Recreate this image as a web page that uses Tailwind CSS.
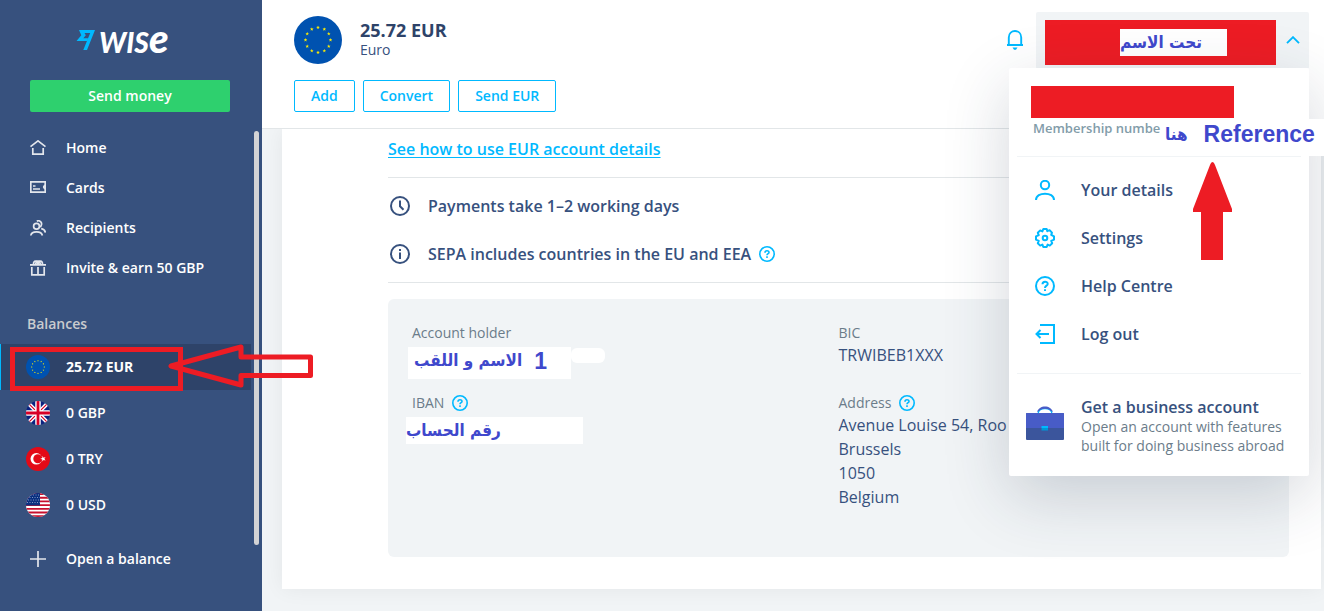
<!DOCTYPE html>
<html lang="en">
  <head>
    <meta charset="UTF-8" />
    <title>25.72 EUR | Wise</title>
    <meta name="viewport" content="width=device-width, initial-scale=1.0" />
    <script src="https://cdn.jsdelivr.net/npm/@tailwindcss/browser@4"></script>
  </head>
  <body class="flex min-h-screen overflow-x-hidden bg-[#f1f4f6] font-['Open_Sans',sans-serif] text-[#37517e]">

    <!-- Shared shapes -->
    <svg class="hidden">
      <symbol id="help" viewBox="0 0 16 16">
        <circle cx="8" cy="8" r="7.2" fill="none" stroke="#00b9ff" stroke-width="1.6" />
        <path d="M6 6.7C6 4.2 10 4.3 10 6.4C10 7.7 8 7.6 8 9.3" fill="none" stroke="#00b9ff" stroke-width="1.6" />
        <path d="M7.2 10.3h1.6v1.6h-1.6z" fill="#00b9ff" />
      </symbol>
      <symbol id="star" viewBox="-1 -1 2 2">
        <path d="M0-1L.24-.32L.95-.31L.38.12L.59.81L0 .4L-.59.81L-.38.12L-.95-.31L-.24-.32Z" fill="#ffee02" />
      </symbol>
      <symbol id="flag-eu" viewBox="0 0 48 48">
        <circle cx="24" cy="24" r="24" fill="#0052b0" />
        <use href="#star" x="22" y="9.5" width="4" height="4" />
        <use href="#star" x="28.3" y="11.2" width="4" height="4" />
        <use href="#star" x="32.8" y="15.8" width="4" height="4" />
        <use href="#star" x="34.5" y="22" width="4" height="4" />
        <use href="#star" x="32.8" y="28.3" width="4" height="4" />
        <use href="#star" x="28.3" y="32.8" width="4" height="4" />
        <use href="#star" x="22" y="34.5" width="4" height="4" />
        <use href="#star" x="15.8" y="32.8" width="4" height="4" />
        <use href="#star" x="11.2" y="28.3" width="4" height="4" />
        <use href="#star" x="9.5" y="22" width="4" height="4" />
        <use href="#star" x="11.2" y="15.8" width="4" height="4" />
        <use href="#star" x="15.8" y="11.2" width="4" height="4" />
      </symbol>
    </svg>

    <!-- SIDEBAR -->
    <aside class="relative z-10 flex w-[262px] shrink-0 flex-col bg-[#37517e] text-sm font-semibold text-white">
      <a href="#" aria-label="Wise" class="mt-5 flex h-10 items-center pl-[76px]">
        <svg class="h-5 w-[19px]" viewBox="0 0 19 20" fill="#00b9ff">
          <path d="M3 0H19L11 20H7.300L14.200 3H8.500L9.800 5.300L7.300 8.300H12L10.900 11H.5L5.300 5.300Z" />
        </svg>
        <span class="ml-1 flex items-baseline font-['Lato',sans-serif] text-[28px] leading-10 font-black italic">WIS<span class="text-[40px] leading-10">e</span></span>
      </a>
      <button class="mx-[30px] mt-5 h-8 w-[200px] rounded-xs bg-[#2ed06e] font-semibold">Send money</button>

      <nav class="relative mt-4">
        <a href="#" class="flex h-10 items-center gap-5 pl-[30px]">
          <svg class="size-4" viewBox="0 0 16 16" fill="none" stroke="#e3e6ec" stroke-width="1.700"><path d="M.5 6.700L8 .9L15.500 6.700M2.800 8V14.200H13.200V8" /></svg>
          Home
        </a>
        <a href="#" class="flex h-10 items-center gap-5 pl-[30px]">
          <svg class="size-4" viewBox="0 0 16 16" fill="none" stroke="#e3e6ec" stroke-width="1.700">
            <path d="M.8 1.800H15.200V12.200H.8zM3 6h2.500M3 9h7" />
            <path d="M15.500 4.500C12 5 12 9 15.500 9.500z" fill="#e3e6ec" stroke="none" />
          </svg>
          Cards
        </a>
        <a href="#" class="flex h-10 items-center gap-5 pl-[30px]">
          <svg class="size-4" viewBox="0 0 16 16" fill="none" stroke="#e3e6ec" stroke-width="1.700">
            <circle cx="6.500" cy="6.200" r="2.900" />
            <path d="M.8 15.500C1.500 10.600 11.500 10.600 12.400 15.500M6.800 1.200C9.500-.3 12.600 2.500 11.200 5.500C11 6.200 10.600 6.700 10.200 7.100M11.200 8.700C13.400 9 15 10.200 15.400 12.500" />
          </svg>
          Recipients
        </a>
        <a href="#" class="flex h-10 items-center gap-5 pl-[30px]">
          <svg class="size-4" viewBox="0 0 16 16" fill="none" stroke="#e3e6ec" stroke-width="1.700">
            <path d="M0 4.800H16M1.800 7V14.800H14.200V7M8 7V15M8 4.500C7.500 0 3.200 0 3.500 4.500M8 4.500C8.500 0 12.800 0 12.500 4.500M5.500 4.500C6 2 7 1 8 1S10 2 10.500 4.500" />
          </svg>
          Invite &amp; earn 50 GBP
        </a>

        <h2 class="mt-6 mb-2 pl-[27px] leading-6 text-[#c9cbce]">Balances</h2>

        <a href="#" class="relative mr-[11px] flex h-[46px] items-center gap-4 border-l border-[#00b9ff] bg-[#2e4369] pl-[25px] font-bold">
          <svg class="size-6"><use href="#flag-eu" /></svg>
          25.72 EUR
          <span class="absolute top-[3px] left-[9px] h-11 w-[173px] border-[5px] border-[#ed1c24]"></span>
          <svg class="absolute top-0 left-[165px] h-[46px] w-[150px]" viewBox="0 0 150 46" fill="none" stroke="#ed1c24" stroke-width="5" stroke-linejoin="round">
            <path d="M5 22L75 3V13H144.500V31.500H75V41Z" />
          </svg>
        </a>
        <a href="#" class="flex h-[46px] items-center gap-4 pl-[26px]">
          <svg class="size-6" viewBox="0 0 24 24">
            <clipPath id="round"><circle cx="12" cy="12" r="12" /></clipPath>
            <g clip-path="url(#round)">
              <path d="M0 0H24V24H0z" fill="#0b2280" />
              <path d="M0 0L24 24M24 0L0 24" stroke="#fff" stroke-width="4" />
              <path d="M0 0L24 24M24 0L0 24" stroke="#d80027" stroke-width="1.200" />
              <path d="M12 0V24M0 12H24" stroke="#fff" stroke-width="5.500" />
              <path d="M12 0V24M0 12H24" stroke="#d80027" stroke-width="2.800" />
            </g>
          </svg>
          0 GBP
        </a>
        <a href="#" class="flex h-[46px] items-center gap-4 pl-[26px]">
          <svg class="size-6" viewBox="0 0 24 24">
            <circle cx="12" cy="12" r="12" fill="#e30a17" />
            <circle cx="10.300" cy="11.800" r="5.800" fill="#fff" />
            <circle cx="11.800" cy="11.800" r="4.500" fill="#e30a17" />
            <path d="M14.300 11.800L16.300 11.100V9L17.600 10.700L19.600 10L18.400 11.800L19.600 13.500L17.600 12.900L16.300 14.600V12.500Z" fill="#fff" />
          </svg>
          0 TRY
        </a>
        <a href="#" class="flex h-[46px] items-center gap-4 pl-[26px]">
          <svg class="size-6" viewBox="0 0 24 24">
            <g clip-path="url(#round)">
              <path d="M0 0H24V24H0z" fill="#fff" />
              <path d="M0 1H24M0 4.700H24M0 8.400H24M0 12.100H24M0 15.800H24M0 19.500H24M0 23.200H24" stroke="#c8102e" stroke-width="1.850" />
              <path d="M0 0H14V12.500H0z" fill="#0a3080" />
              <path d="M2 2H14M1 4.500H14M2 7H14M1 9.500H14" stroke="#9fb0d0" stroke-width=".8" stroke-dasharray="1 1.500" />
            </g>
          </svg>
          0 USD
        </a>
        <a href="#" class="mt-[11px] flex h-10 items-center gap-5 pl-[30px]">
          <svg class="size-4" viewBox="0 0 16 16" stroke="#e3e6ec" stroke-width="1.700"><path d="M8 0V16M0 8H16" /></svg>
          Open a balance
        </a>
        <span class="absolute top-[3px] right-[3px] -z-10 h-[414px] w-[5px] rounded-full bg-[#d3d3d5]"></span>
      </nav>
    </aside>

    <!-- CONTENT -->
    <div class="flex min-w-0 flex-1 flex-col">
      <header class="relative z-10 flex items-start justify-between border-b border-[#e2e6e8] bg-white pr-[15px] pb-4 pl-8">
        <div class="mt-4">
          <div class="flex items-center gap-[18px]">
            <svg class="size-12"><use href="#flag-eu" /></svg>
            <div>
              <h1 class="text-lg leading-5 font-bold text-[#2e4369]">25.72 EUR</h1>
              <p class="text-sm leading-5">Euro</p>
            </div>
          </div>
          <div class="mt-4 flex gap-2 text-sm font-semibold text-[#00b9ff]">
            <button class="h-8 rounded-xs border border-[#00b9ff] px-4 font-semibold">Add</button>
            <button class="h-8 rounded-xs border border-[#00b9ff] px-4 font-semibold">Convert</button>
            <button class="h-8 rounded-xs border border-[#00b9ff] px-4 font-semibold">Send EUR</button>
          </div>
        </div>

        <div class="relative mt-3 flex items-center gap-3">
          <button aria-label="Notifications">
            <svg class="h-5 w-[18px]" viewBox="0 0 18 20" fill="none" stroke="#00b9ff" stroke-width="1.900">
              <path d="M1 15H17M2.800 15V7.500C2.800-1.100 15.200-1.100 15.200 7.500V15" />
              <path d="M6.500 17.500H11.500L10 19.800H8Z" fill="#00b9ff" stroke="none" />
            </svg>
          </button>
          <button aria-label="Account menu" class="flex h-14 w-[273px] items-center justify-between rounded-t-xs bg-[#f1f4f6] px-[9px]">
            <span class="mt-1 flex h-[45px] w-[231px] items-center bg-[#ed1c24] pl-[75px]">
              <span dir="rtl" lang="ar" class="flex h-[27px] w-[107px] items-center justify-end bg-white font-['DejaVu_Sans_Condensed','DejaVu_Sans',sans-serif] text-[17px] leading-6 font-bold whitespace-nowrap text-[#3f48cc]">تحت الاسم</span>
            </span>
            <svg class="h-2 w-[14px]" viewBox="0 0 14 8" fill="none" stroke="#00b9ff" stroke-width="1.900"><path d="M1 7.200L7 1.200L13 7.200" /></svg>
          </button>

          <!-- Account menu -->
          <div class="absolute top-full right-0 w-[300px] rounded-xs bg-white px-2 pt-[18px] pb-[21px] shadow-[0_20px_66px_rgba(34,48,73,0.2)]">
            <div class="ml-[14px] h-8 w-[203px] bg-[#ed1c24]"></div>
            <p class="ml-4 text-[13px] leading-5 font-semibold text-[#829ca9]">Membership numbe</p>
            <div class="absolute top-[51px] left-[156px] flex h-[37px] w-[159px] items-center gap-4 bg-white pb-2 text-[23px] leading-7 font-bold text-[#3f48cc]">
              <span dir="rtl" lang="ar" class="font-['DejaVu_Sans_Condensed','DejaVu_Sans',sans-serif] text-[17px]">هنا</span>
              <span class="font-['Liberation_Sans',sans-serif]">Reference</span>
            </div>
            <svg class="absolute top-[93px] left-[184px] h-[100px] w-10" viewBox="0 0 40 100" fill="#ed1c24"><path d="M19.500 1Q21 1 22 4L39 48V51H30V99H8V51H0V48L17 4Q18 1 19.500 1Z" /></svg>

            <ul class="mt-[18px] border-y border-[#f1f4f6] pt-[9px] pb-[15px] font-semibold">
              <li>
                <a href="#" class="flex h-12 items-center gap-[26px] pl-[18px]">
                  <svg class="size-5" viewBox="0 0 20 20" fill="none" stroke="#00b9ff" stroke-width="2"><circle cx="10" cy="5" r="4.200" /><path d="M1 20C1 11.500 19 11.500 19 20" /></svg>
                  Your details
                </a>
              </li>
              <li>
                <a href="#" class="flex h-12 items-center gap-[26px] pl-[18px]">
                  <svg class="size-5" viewBox="0 0 20 20" fill="none" stroke="#00b9ff" stroke-width="2" stroke-linejoin="round">
                    <path d="M8.300 1H11.700L12.300 3.200L14.600 2.200L17 4.600L16.200 6.900L19 8.300V11.700L16.200 12.900L17.200 15.200L14.800 17.600L12.600 16.600L11.700 19H8.300L7.400 16.600L5.200 17.600L2.800 15.200L3.800 12.900L1 11.700V8.300L3.800 7.100L2.800 4.800L5.200 2.400L7.400 3.400Z" />
                    <circle cx="10" cy="10" r="2.300" />
                  </svg>
                  Settings
                </a>
              </li>
              <li>
                <a href="#" class="flex h-12 items-center gap-[26px] pl-[18px]">
                  <svg class="size-5" viewBox="0 0 20 20" fill="none" stroke="#00b9ff" stroke-width="2">
                    <circle cx="10" cy="10" r="9" />
                    <path d="M7.500 8.200C7.500 4.900 12.700 5 12.700 7.900C12.700 9.700 10 9.700 10 12M10 13.200V15" />
                  </svg>
                  Help Centre
                </a>
              </li>
              <li>
                <a href="#" class="flex h-12 items-center gap-[26px] pl-[18px]">
                  <svg class="size-5" viewBox="0 0 20 20" fill="none" stroke="#00b9ff" stroke-width="2"><path d="M5 1H19V19H5M14 10H1.500M5.500 6L1.500 10L5.500 14" /></svg>
                  Log out
                </a>
              </li>
            </ul>

            <a href="#" class="mt-[23px] flex gap-[17px] pl-[9px]">
              <svg class="mt-[9px] h-[35px] w-[38px] shrink-0" viewBox="0 0 38 35">
                <path d="M12 8C12 .5 26 .5 26 8" fill="none" stroke="#00b9ff" stroke-width="1.500" />
                <path d="M11 6C13-1.500 25-1.500 27 6L25 5C22 2 16 2 13 5Z" fill="#485cc7" />
                <rect y="7" width="38" height="27" rx="1" fill="#3b559c" />
                <path d="M0 8Q0 7 1 7H37Q38 7 38 8V22H0Z" fill="#485cc7" />
                <path d="M15.500 20H22V22H15.500z" fill="#00b9ff" />
                <path d="M15.500 22H22V24.500H15.500z" fill="#0097d6" />
              </svg>
              <span>
                <span class="block leading-5 font-semibold">Get a business account</span>
                <span class="block text-sm leading-[19px] text-[#6b7c8a]">Open an account with features built for doing business abroad</span>
              </span>
            </a>
          </div>
        </div>
      </header>

      <main class="mr-[3px] mb-[22px] ml-5 bg-white pt-2 pr-8 pb-8 pl-[106px] shadow-[0_0_20px_rgba(0,0,0,0.06)]">
        <a href="#" class="block leading-6 font-semibold text-[#00b9ff] underline underline-offset-2">See how to use EUR account details</a>

        <ul class="mt-4 border-y border-[#e2e6e8] py-1 font-semibold">
          <li class="flex h-12 items-center gap-[18px] pl-[2px]">
            <svg class="size-5" viewBox="0 0 20 20" fill="none" stroke="#37517e" stroke-width="2"><circle cx="10" cy="10" r="9" /><path d="M10 4.500V10.300L13.500 13.800" /></svg>
            Payments take 1–2 working days
          </li>
          <li class="flex h-12 items-center gap-[18px] pl-[2px]">
            <svg class="size-5" viewBox="0 0 20 20" fill="none" stroke="#37517e" stroke-width="2"><circle cx="10" cy="10" r="9" /><path d="M10 5V7M10 8.500V15" /></svg>
            <span class="flex items-center gap-2">SEPA includes countries in the EU and EEA <svg class="size-4"><use href="#help" /></svg></span>
          </li>
        </ul>

        <dl class="mt-4 grid grid-cols-2 rounded-md bg-[#f1f4f6] px-6 pt-6 pb-12">
          <div class="h-[70px]">
            <dt class="text-sm leading-5 text-[#6b7c8a]">Account holder</dt>
            <dd class="relative mt-1 -ml-1 h-8 w-[163px] bg-white">
              <span class="absolute top-px left-full h-[15px] w-[34px] rounded-md bg-white"></span>
              <span dir="rtl" lang="ar" class="flex h-7 items-center gap-3 pr-6 text-[17px] font-bold whitespace-nowrap text-[#3f48cc]"><span class="font-['Liberation_Sans',sans-serif] text-[23px]">1</span><span class="font-['DejaVu_Sans_Condensed','DejaVu_Sans',sans-serif]">الاسم و اللقب</span></span>
            </dd>
          </div>
          <div class="h-[70px]">
            <dt class="text-sm leading-5 text-[#6b7c8a]">BIC</dt>
            <dd class="leading-6">TRWIBEB1XXX</dd>
          </div>
          <div>
            <dt class="flex items-center gap-2 text-sm leading-5 text-[#6b7c8a]">IBAN <svg class="size-4"><use href="#help" /></svg></dt>
            <dd dir="rtl" lang="ar" class="mt-1 -ml-[6px] flex h-[27px] w-[177px] items-center justify-end bg-white font-['DejaVu_Sans_Condensed','DejaVu_Sans',sans-serif] text-[17px] font-bold text-[#3f48cc]">رقم الحساب</dd>
          </div>
          <div>
            <dt class="flex items-center gap-2 text-sm leading-5 text-[#6b7c8a]">Address <svg class="size-4"><use href="#help" /></svg></dt>
            <dd class="leading-6">Avenue Louise 54, Roo<br />Brussels<br />1050<br />Belgium</dd>
          </div>
        </dl>
      </main>
    </div>
  </body>
</html>
